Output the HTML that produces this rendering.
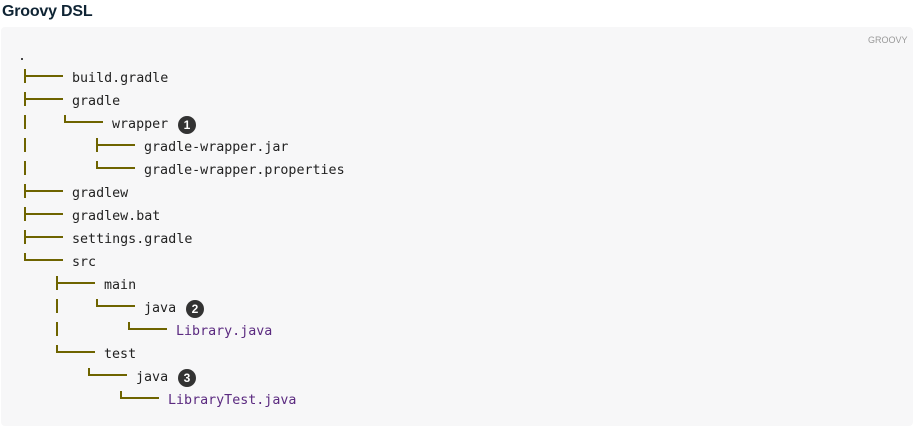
<!DOCTYPE html>
<html><head><meta charset="utf-8"><style>
body{margin:0;width:924px;height:437px;background:#fff;position:relative;overflow:hidden}
h1{position:absolute;left:2px;top:0;margin:0;font:bold 16px "Liberation Sans",sans-serif;color:#0f2434;line-height:24px;letter-spacing:-0.2px}
.box{position:absolute;left:1px;top:27px;width:912px;height:399px;background:#f7f7f8;border-radius:4px}
.lab{position:absolute;left:868px;top:35px;font:9px "Liberation Sans",sans-serif;color:#999;letter-spacing:0}
.t{position:absolute;font:13.33px "DejaVu Sans Mono","Liberation Mono",monospace;color:#222;line-height:23px;white-space:pre;margin-top:3px}
.p{color:#5b2a80}
.v{position:absolute;width:2px;background:#6e6400}
.h{position:absolute;height:2px;background:#6e6400}
.b{position:absolute;width:18px;height:18px;border-radius:50%;background:#333;color:#fff;font:bold 12px "Liberation Sans",sans-serif;text-align:center;line-height:18px}
</style></head><body>
<h1>Groovy DSL</h1>
<div class="box"></div>
<div class="lab">GROOVY</div>
<div class="t" style="left:18px;top:42px">.</div>

<div class="v" style="left:24px;top:69px;height:14px"></div><div class="h" style="left:24px;top:75px;width:39px"></div>
<div class="t" style="left:72px;top:64px">build.gradle</div>
<div class="v" style="left:24px;top:92px;height:14px"></div><div class="h" style="left:24px;top:98px;width:39px"></div>
<div class="t" style="left:72px;top:87px">gradle</div>
<div class="v" style="left:24px;top:115px;height:14px"></div>
<div class="v" style="left:64px;top:115px;height:7px"></div><div class="h" style="left:64px;top:121px;width:39px"></div>
<div class="t" style="left:112px;top:110px">wrapper</div>
<div class="b" style="left:178px;top:116px">1</div>
<div class="v" style="left:24px;top:138px;height:14px"></div>
<div class="v" style="left:96px;top:138px;height:14px"></div><div class="h" style="left:96px;top:144px;width:39px"></div>
<div class="t" style="left:144px;top:133px">gradle-wrapper.jar</div>
<div class="v" style="left:24px;top:161px;height:14px"></div>
<div class="v" style="left:96px;top:161px;height:7px"></div><div class="h" style="left:96px;top:167px;width:39px"></div>
<div class="t" style="left:144px;top:156px">gradle-wrapper.properties</div>
<div class="v" style="left:24px;top:184px;height:14px"></div><div class="h" style="left:24px;top:190px;width:39px"></div>
<div class="t" style="left:72px;top:179px">gradlew</div>
<div class="v" style="left:24px;top:207px;height:14px"></div><div class="h" style="left:24px;top:213px;width:39px"></div>
<div class="t" style="left:72px;top:202px">gradlew.bat</div>
<div class="v" style="left:24px;top:230px;height:14px"></div><div class="h" style="left:24px;top:236px;width:39px"></div>
<div class="t" style="left:72px;top:225px">settings.gradle</div>
<div class="v" style="left:24px;top:253px;height:7px"></div><div class="h" style="left:24px;top:259px;width:39px"></div>
<div class="t" style="left:72px;top:248px">src</div>
<div class="v" style="left:56px;top:276px;height:14px"></div><div class="h" style="left:56px;top:282px;width:39px"></div>
<div class="t" style="left:104px;top:271px">main</div>
<div class="v" style="left:56px;top:299px;height:14px"></div>
<div class="v" style="left:96px;top:299px;height:7px"></div><div class="h" style="left:96px;top:305px;width:39px"></div>
<div class="t" style="left:144px;top:294px">java</div>
<div class="b" style="left:186px;top:300px">2</div>
<div class="v" style="left:56px;top:322px;height:14px"></div>
<div class="v" style="left:128px;top:322px;height:7px"></div><div class="h" style="left:128px;top:328px;width:39px"></div>
<div class="t p" style="left:176px;top:317px">Library.java</div>
<div class="v" style="left:56px;top:345px;height:7px"></div><div class="h" style="left:56px;top:351px;width:39px"></div>
<div class="t" style="left:104px;top:340px">test</div>
<div class="v" style="left:88px;top:368px;height:7px"></div><div class="h" style="left:88px;top:374px;width:39px"></div>
<div class="t" style="left:136px;top:363px">java</div>
<div class="b" style="left:178px;top:369px">3</div>
<div class="v" style="left:120px;top:391px;height:7px"></div><div class="h" style="left:120px;top:397px;width:39px"></div>
<div class="t p" style="left:168px;top:386px">LibraryTest.java</div>
</body></html>
